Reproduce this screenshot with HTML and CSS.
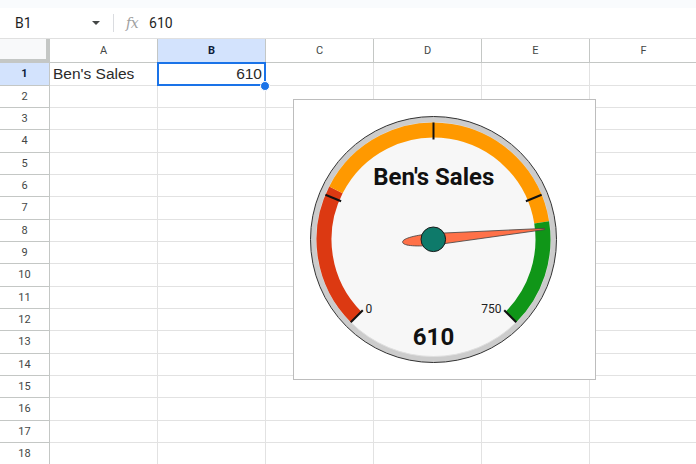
FILE: index.html
```html
<!DOCTYPE html>
<html>
<head>
<meta charset="utf-8">
<link rel="stylesheet" href="styles.css">
</head>
<body>
<div class="app">
  <div class="topstrip"></div>
  <div class="formulabar">
    <div class="namebox"><span class="ref">B1</span><span class="caret"></span></div>
    <div class="sep"></div>
    <span class="fx">fx</span>
    <span class="fvalue">610</span>
  </div>
  <div class="sheet">
    <div class="grid">
      <div class="corner"></div>
      <div class="colhead">A</div>
      <div class="colhead sel">B</div>
      <div class="colhead">C</div>
      <div class="colhead">D</div>
      <div class="colhead">E</div>
      <div class="colhead">F</div>

      <div class="rowhead sel">1</div>
      <div class="cell text">Ben's Sales</div>
      <div class="cell num active">610</div>
      <div class="cell"></div><div class="cell"></div><div class="cell"></div><div class="cell"></div>

      <div class="rowhead">2</div><div class="cell"></div><div class="cell"></div><div class="cell"></div><div class="cell"></div><div class="cell"></div><div class="cell"></div>
      <div class="rowhead">3</div><div class="cell"></div><div class="cell"></div><div class="cell"></div><div class="cell"></div><div class="cell"></div><div class="cell"></div>
      <div class="rowhead">4</div><div class="cell"></div><div class="cell"></div><div class="cell"></div><div class="cell"></div><div class="cell"></div><div class="cell"></div>
      <div class="rowhead">5</div><div class="cell"></div><div class="cell"></div><div class="cell"></div><div class="cell"></div><div class="cell"></div><div class="cell"></div>
      <div class="rowhead">6</div><div class="cell"></div><div class="cell"></div><div class="cell"></div><div class="cell"></div><div class="cell"></div><div class="cell"></div>
      <div class="rowhead">7</div><div class="cell"></div><div class="cell"></div><div class="cell"></div><div class="cell"></div><div class="cell"></div><div class="cell"></div>
      <div class="rowhead">8</div><div class="cell"></div><div class="cell"></div><div class="cell"></div><div class="cell"></div><div class="cell"></div><div class="cell"></div>
      <div class="rowhead">9</div><div class="cell"></div><div class="cell"></div><div class="cell"></div><div class="cell"></div><div class="cell"></div><div class="cell"></div>
      <div class="rowhead">10</div><div class="cell"></div><div class="cell"></div><div class="cell"></div><div class="cell"></div><div class="cell"></div><div class="cell"></div>
      <div class="rowhead">11</div><div class="cell"></div><div class="cell"></div><div class="cell"></div><div class="cell"></div><div class="cell"></div><div class="cell"></div>
      <div class="rowhead">12</div><div class="cell"></div><div class="cell"></div><div class="cell"></div><div class="cell"></div><div class="cell"></div><div class="cell"></div>
      <div class="rowhead">13</div><div class="cell"></div><div class="cell"></div><div class="cell"></div><div class="cell"></div><div class="cell"></div><div class="cell"></div>
      <div class="rowhead">14</div><div class="cell"></div><div class="cell"></div><div class="cell"></div><div class="cell"></div><div class="cell"></div><div class="cell"></div>
      <div class="rowhead">15</div><div class="cell"></div><div class="cell"></div><div class="cell"></div><div class="cell"></div><div class="cell"></div><div class="cell"></div>
      <div class="rowhead">16</div><div class="cell"></div><div class="cell"></div><div class="cell"></div><div class="cell"></div><div class="cell"></div><div class="cell"></div>
      <div class="rowhead">17</div><div class="cell"></div><div class="cell"></div><div class="cell"></div><div class="cell"></div><div class="cell"></div><div class="cell"></div>
      <div class="rowhead">18</div><div class="cell"></div><div class="cell"></div><div class="cell"></div><div class="cell"></div><div class="cell"></div><div class="cell"></div>
    </div>

    <div class="chart">
      <svg class="gauge" width="279" height="279" viewBox="0 0 279 279">
        <circle cx="139.5" cy="139.5" r="123" fill="#cccccc" stroke="#333333" stroke-width="1"/>
        <circle cx="139.5" cy="139.5" r="117" fill="#f7f7f7" stroke="#e0e0e0" stroke-width="1"/>
        <path d="M62.07 216.93A109.5 109.5 0 0 1 41.94 89.79" fill="none" stroke="#dc3912" stroke-width="15"/>
        <path d="M41.94 89.79A109.5 109.5 0 0 1 247.65 122.37" fill="none" stroke="#ff9900" stroke-width="15"/>
        <path d="M247.65 122.37A109.5 109.5 0 0 1 216.93 216.93" fill="none" stroke="#109618" stroke-width="15"/>
        <g stroke="#111111" stroke-width="2">
          <line x1="68.79" y1="210.21" x2="56.77" y2="222.23"/>
          <line x1="47.11" y1="101.23" x2="31.40" y2="94.72"/>
          <line x1="139.5" y1="39.5" x2="139.5" y2="22.5"/>
          <line x1="231.89" y1="101.23" x2="247.60" y2="94.72"/>
          <line x1="210.21" y1="210.21" x2="222.23" y2="222.23"/>
        </g>
        <text class="tick-label" x="71.5" y="213">0</text>
        <text class="tick-label" x="207.5" y="213" text-anchor="end">750</text>
        <text class="g-title" x="139.8" y="85" text-anchor="middle">Ben's Sales</text>
        <text class="g-value" x="139.5" y="245" text-anchor="middle">610</text>
        <g transform="translate(139.5 139.3) rotate(-5.3)">
          <path d="M111.5 -0.6L111.5 0.6L0 5.8C-16 6 -31 4 -31 0C-31 -4 -16 -6 0 -5.8Z" fill="#ff7148" stroke="#444444" stroke-width="0.8"/>
        </g>
        <circle cx="139.3" cy="139.3" r="12.3" fill="#0e7a6a" stroke="#1a1a1a" stroke-width="1"/>
      </svg>
    </div>
  </div>
</div>
</body>
</html>
```

FILE: styles.css
```css
html, body {
  margin: 0;
  padding: 0;
  background: #ffffff;
}

.app {
  width: 696px;
  height: 464px;
  overflow: hidden;
  font-family: Roboto, "Liberation Sans", sans-serif;
}

.topstrip {
  height: 8px;
  background: #f9fbfd;
}

.formulabar {
  height: 30px;
  border-bottom: 1px solid #e0e0e0;
  display: flex;
  align-items: center;
  background: #ffffff;
}

.namebox {
  width: 113px;
  box-sizing: border-box;
  padding-left: 15px;
  padding-right: 13px;
  display: flex;
  align-items: center;
  justify-content: space-between;
}

.ref {
  font-size: 14px;
  color: #1f1f1f;
}

.caret {
  width: 0;
  height: 0;
  border-left: 4px solid transparent;
  border-right: 4px solid transparent;
  border-top: 4px solid #444746;
}

.sep {
  width: 1px;
  height: 18px;
  background: #dadce0;
}

.fx {
  margin-left: 12px;
  font-family: "DejaVu Serif", "Liberation Serif", serif;
  font-style: italic;
  font-size: 14px;
  color: #a0a0a0;
  letter-spacing: -0.5px;
}

.fvalue {
  margin-left: 11px;
  font-size: 14px;
  color: #1f1f1f;
}

.sheet {
  position: relative;
}

.grid {
  display: grid;
  grid-template-columns: 50px repeat(6, 108px);
  grid-template-rows: 24.33px repeat(18, 22.33px);
}

.grid > div {
  box-sizing: border-box;
  border-right: 1px solid #e2e2e2;
  border-bottom: 1px solid #e2e2e2;
}

.grid > .corner {
  background: #f8f9fa;
  border-right: 4px solid #c4c7c5;
  border-bottom: 4px solid #c4c7c5;
}

.grid > .colhead {
  border-right-color: #c4c7c5;
  border-bottom-color: #c4c7c5;
  display: flex;
  align-items: center;
  justify-content: center;
  font-size: 11px;
  color: #444746;
}

.grid > .rowhead {
  border-right-color: #c4c7c5;
  border-bottom-color: #c4c7c5;
  display: flex;
  align-items: center;
  justify-content: center;
  font-size: 11px;
  color: #444746;
}

.grid > .sel {
  background: #d3e3fd;
  font-weight: 700;
  color: #0b1c3a;
}

.cell {
  font-family: "Liberation Sans", Arial, sans-serif;
  font-size: 15.5px;
  color: #2a2a2a;
  display: flex;
  align-items: center;
  padding: 1px 3px 0 3px;
  white-space: nowrap;
}

.cell.num {
  justify-content: flex-end;
}

.active {
  position: relative;
}

.active::after {
  content: "";
  position: absolute;
  left: -1px;
  top: -1px;
  right: -1px;
  bottom: -1px;
  border: 2px solid #1a73e8;
}

.active::before {
  content: "";
  position: absolute;
  right: -5px;
  bottom: -6px;
  width: 8px;
  height: 8px;
  border-radius: 50%;
  background: #1a73e8;
  border: 1px solid #ffffff;
  z-index: 2;
}

.chart {
  position: absolute;
  left: 293px;
  top: 60px;
  width: 303px;
  height: 281px;
  box-sizing: border-box;
  border: 1px solid #bdbdbd;
  background: #ffffff;
}

.gauge {
  display: block;
}

.tick-label {
  font-family: Roboto, "Liberation Sans", sans-serif;
  font-size: 12px;
  fill: #222222;
}

.g-title {
  font-family: Roboto, "Liberation Sans", sans-serif;
  font-size: 24px;
  font-weight: 700;
  fill: #111111;
}

.g-value {
  font-family: Roboto, "Liberation Sans", sans-serif;
  font-size: 24px;
  font-weight: 700;
  fill: #111111;
}
```
